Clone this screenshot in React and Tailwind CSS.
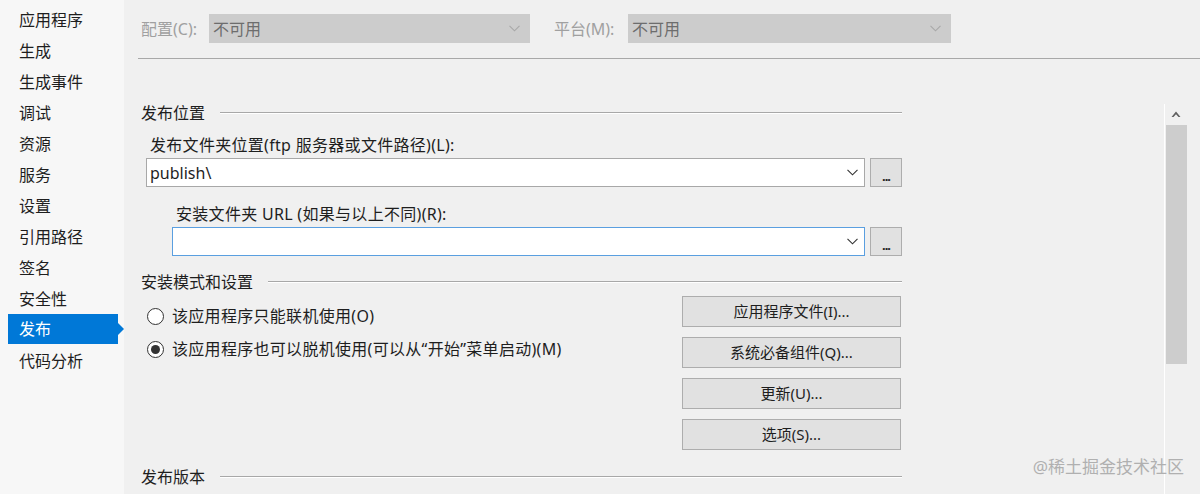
const navItems = [
  "应用程序",
  "生成",
  "生成事件",
  "调试",
  "资源",
  "服务",
  "设置",
  "引用路径",
  "签名",
  "安全性",
  "发布",
  "代码分析",
];

function Chevron({ color = "#444" }) {
  return (
    <svg width="11" height="7" viewBox="0 0 11 7" fill="none">
      <polyline points="0.5,0.8 5.5,5.8 10.5,0.8" stroke={color} strokeWidth="1.1" />
    </svg>
  );
}

function SectionHeader({ title }) {
  return (
    <div className="flex items-center h-[22px] pl-[3px]">
      <span className="text-[16px] leading-[22px] text-[#1e1e1e]">{title}</span>
      <div className="ml-[15px] flex-1 h-[2px] border-t border-[#a8a8a8] border-b border-b-white"></div>
    </div>
  );
}

function DisabledSelect({ label, width, labelWidth }) {
  return (
    <div className="flex items-center">
      <span className={`${labelWidth} text-[16px] text-[#a0a0a0]`}>{label}</span>
      <div className={`${width} h-[29px] bg-[#cccccc] flex items-center justify-between pl-[4px] pr-[10px]`}>
        <span className="text-[16px] text-[#6d6d6d]">不可用</span>
        <Chevron color="#a8a8a8" />
      </div>
    </div>
  );
}

function ComboRow({ value, focused }) {
  return (
    <div className="flex items-center gap-[5px] h-[29px]">
      <div
        className={`flex-1 h-full bg-white border flex items-center justify-between pl-[3px] pr-[6px] ${
          focused ? "border-[#5a9fe0]" : "border-[#a8a8a8]"
        }`}
      >
        <span className="text-[16px] text-[#1e1e1e]">{value}</span>
        <Chevron color="#333" />
      </div>
      <div className="w-[32px] h-[29px] bg-[#e1e1e1] border border-[#adadad] flex items-end justify-center pb-[5px]">
        <span className="text-[13px] leading-[10px] font-bold text-[#222] tracking-[-1px]">...</span>
      </div>
    </div>
  );
}

function Radio({ checked, label }) {
  return (
    <div className="flex items-center h-[22px]">
      <div className="w-[17px] h-[17px] rounded-full border border-[#333] bg-white flex items-center justify-center">
        {checked && <div className="w-[9px] h-[9px] rounded-full bg-[#333]"></div>}
      </div>
      <span className="ml-[8px] text-[16px] leading-[22px] tracking-[0.3px] text-[#1e1e1e]">{label}</span>
    </div>
  );
}

function ActionButton({ children }) {
  return (
    <div className="w-[219px] h-[31px] bg-[#e1e1e1] border border-[#adadad] flex items-center justify-center text-[15px] text-[#1e1e1e]">
      {children}
    </div>
  );
}

export default function App() {
  return (
    <div className="relative flex w-[1200px] h-[494px] overflow-hidden bg-[#f0f0f0] font-['Noto_Sans','Noto_Sans_CJK_SC',sans-serif]">
      <aside className="w-[124px] shrink-0 bg-[#f7f7f7] pt-[4px]">
        {navItems.map((item) => {
          const active = item === "发布";
          return active ? (
            <div key={item} className="relative h-[30px] mb-[1px] ml-[8px] w-[110px] bg-[#0078d7] flex items-center pl-[11px]">
              <span className="text-[16px] text-white">{item}</span>
              <div className="absolute right-[-6px] top-[9px] w-0 h-0 border-y-[6px] border-y-transparent border-l-[6px] border-l-[#0078d7]"></div>
            </div>
          ) : (
            <div key={item} className="h-[31px] flex items-center pl-[19px]">
              <span className="text-[16px] text-[#1e1e1e]">{item}</span>
            </div>
          );
        })}
      </aside>

      <main className="flex-1 flex flex-col pl-[14px]">
        <div className="h-[59px] shrink-0 flex items-center gap-[24px] border-b border-[#a8a8a8] pl-[3px] pb-[1px]">
          <DisabledSelect label="配置(C):" labelWidth="w-[68px]" width="w-[321px]" />
          <DisabledSelect label="平台(M):" labelWidth="w-[74px]" width="w-[323px]" />
        </div>

        <div className="flex flex-1">
          <div className="w-[764px] flex flex-col pt-[43px]">
            <SectionHeader title="发布位置" />

            <div className="mt-[10px] pl-[12px] text-[16px] leading-[22px] tracking-[0.3px] text-[#1e1e1e]">
              发布文件夹位置(ftp 服务器或文件路径)(L):
            </div>
            <div className="mt-[2px] pl-[8px]">
              <ComboRow value="publish\" />
            </div>

            <div className="mt-[16px] pl-[38px] text-[16px] leading-[22px] tracking-[0.3px] text-[#1e1e1e]">
              安装文件夹 URL (如果与以上不同)(R):
            </div>
            <div className="mt-[2px] pl-[34px]">
              <ComboRow value="" focused />
            </div>

            <div className="mt-[15px]">
              <SectionHeader title="安装模式和设置" />
            </div>

            <div className="mt-[3px] flex justify-between pl-[9px]">
              <div className="flex flex-col gap-[11px] pt-[9px]">
                <Radio label="该应用程序只能联机使用(O)" />
                <Radio checked label="该应用程序也可以脱机使用(可以从“开始”菜单启动)(M)" />
              </div>
              <div className="flex flex-col gap-[10px] mr-[1px]">
                <ActionButton>应用程序文件(I)...</ActionButton>
                <ActionButton>系统必备组件(Q)...</ActionButton>
                <ActionButton>更新(U)...</ActionButton>
                <ActionButton>选项(S)...</ActionButton>
              </div>
            </div>

            <div className="mt-[16px]">
              <SectionHeader title="发布版本" />
            </div>
          </div>

          <div className="flex-1"></div>

          <div className="w-[23px] mt-[45px] mr-[13px] border-l border-white flex flex-col">
            <div className="h-[21px] flex items-center justify-center">
              <svg width="10" height="7" viewBox="0 0 10 7">
                <polygon points="5,0.5 9.5,6 7.5,6 5,3.2 2.5,6 0.5,6" fill="#606060" />
              </svg>
            </div>
            <div className="h-[239px] ml-[1px] w-[21px] bg-[#cdcdcd]"></div>
          </div>
        </div>
      </main>

      <div className="absolute right-[16px] bottom-[16px] text-[17px] leading-[22px] text-[#b0b0b0]">
        @稀土掘金技术社区
      </div>
    </div>
  );
}
